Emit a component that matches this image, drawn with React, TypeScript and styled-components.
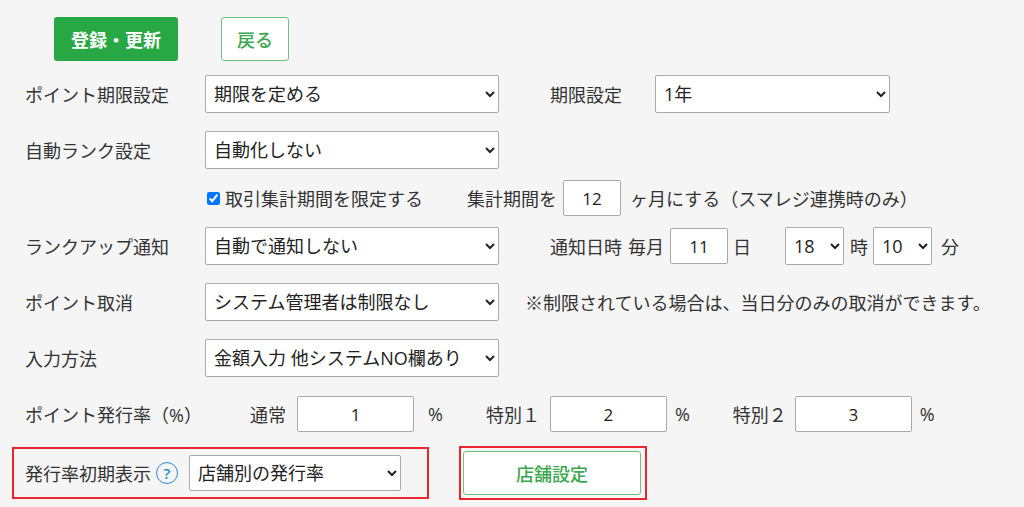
import React from 'react';
import styled, { createGlobalStyle } from 'styled-components';

const Global = createGlobalStyle`
  body {
    margin: 0;
    background: #f5f5f5;
    font-family: "Open Sans", "Noto Sans CJK JP", sans-serif;
    color: #333;
    font-size: 18px;
  }
`;

const Page = styled.div`
  width: 1024px;
  height: 507px;
  overflow: hidden;
  padding: 17px 0 0 0;
  box-sizing: border-box;
`;

const Toolbar = styled.div`
  display: flex;
  gap: 43px;
  padding-left: 54px;
  margin-bottom: 5px;
`;

const PrimaryButton = styled.button`
  height: 44px;
  width: 124px;
  background: #28a745;
  color: #fff;
  border: none;
  border-radius: 3px;
  font: 600 18px "Open Sans", "Noto Sans CJK JP", sans-serif;
`;

const OutlineButton = styled.button<{ $w?: number; $h?: number }>`
  height: ${p => p.$h ?? 44}px;
  width: ${p => p.$w ?? 68}px;
  padding: 0;
  background: #fff;
  color: #3aa84f;
  border: 1px solid #6cc47e;
  border-radius: 3px;
  font: 500 18px "Open Sans", "Noto Sans CJK JP", sans-serif;
`;

const Row = styled.div<{ $h?: number }>`
  display: flex;
  align-items: center;
  height: ${p => p.$h ?? 56}px;
  padding-left: 25px;
  white-space: nowrap;
`;

const Label = styled.span<{ $w?: number; $ml?: number }>`
  width: ${p => p.$w ?? 180}px;
  margin-left: ${p => p.$ml ?? 0}px;
  flex-shrink: 0;
`;

const Text = styled.span<{ $ml?: number }>`
  margin-left: ${p => p.$ml ?? 0}px;
`;

const Select = styled.select<{ $w: number; $ml?: number; $h?: number }>`
  width: ${p => p.$w}px;
  height: ${p => p.$h ?? 38}px;
  margin-left: ${p => p.$ml ?? 0}px;
  padding: 0 4px;
  background: #fff;
  border: 1px solid #a9a9a9;
  border-radius: 2px;
  font: 18px "Open Sans", "Noto Sans CJK JP", sans-serif;
  color: #222;
`;

const Input = styled.input<{ $w: number; $ml?: number }>`
  width: ${p => p.$w}px;
  height: 36px;
  box-sizing: border-box;
  margin-left: ${p => p.$ml ?? 0}px;
  background: #fff;
  border: 1px solid #a9a9a9;
  border-radius: 2px;
  text-align: center;
  font: 17px "Open Sans", "Noto Sans CJK JP", sans-serif;
  color: #222;
`;

const Check = styled.label`
  display: flex;
  align-items: center;
  gap: 5px;
  margin-left: 182px;
  input { margin: 0; width: 13px; height: 13px; accent-color: #0075ff; }
`;

const Highlight = styled.div<{ $w: number; $ml?: number; $h?: number; $pl?: number }>`
  display: flex;
  align-items: center;
  width: ${p => p.$w}px;
  height: ${p => p.$h ?? 52}px;
  box-sizing: border-box;
  margin-left: ${p => p.$ml ?? 0}px;
  border: 2px solid #e8262e;
  padding-left: ${p => p.$pl ?? 11}px;
`;

const Help = styled.span`
  display: inline-flex;
  align-items: center;
  justify-content: center;
  width: 22px;
  height: 22px;
  border: 1.5px solid #2a8ad6;
  border-radius: 50%;
  color: #2a8ad6;
  font-size: 15px;
  font-weight: 600;
  margin: 0 11px 0 5px;
  box-sizing: border-box;
`;

const BottomRow = styled.div`
  display: flex;
  align-items: center;
  padding-left: 12px;
  margin-top: 4px;
  white-space: nowrap;
`;

const hours = Array.from({ length: 24 }, (_, i) => i);

export default function App() {
  return (
    <Page>
      <Global />
      <Toolbar>
        <PrimaryButton>登録・更新</PrimaryButton>
        <OutlineButton>戻る</OutlineButton>
      </Toolbar>
      <Row>
        <Label>ポイント期限設定</Label>
        <Select $w={294}><option>期限を定める</option></Select>
        <Label $w={105} $ml={51}>期限設定</Label>
        <Select $w={235}><option>1年</option></Select>
      </Row>
      <Row>
        <Label>自動ランク設定</Label>
        <Select $w={294}><option>自動化しない</option></Select>
      </Row>
      <Row $h={40}>
        <Check><input type="checkbox" defaultChecked readOnly />取引集計期間を限定する</Check>
        <Text $ml={44}>集計期間を</Text>
        <Input $w={58} $ml={6} defaultValue="12" />
        <Text $ml={9}>ヶ月にする（スマレジ連携時のみ）</Text>
      </Row>
      <Row>
        <Label>ランクアップ通知</Label>
        <Select $w={294}><option>自動で通知しない</option></Select>
        <Text $ml={51}>通知日時</Text>
        <Text $ml={6}>毎月</Text>
        <Input $w={58} $ml={6} defaultValue="11" />
        <Text $ml={5}>日</Text>
        <Select $w={59} $ml={34} defaultValue="18">
          {hours.map(h => <option key={h}>{h}</option>)}
        </Select>
        <Text $ml={6}>時</Text>
        <Select $w={59} $ml={5} defaultValue="10"><option>10</option></Select>
        <Text $ml={9}>分</Text>
      </Row>
      <Row>
        <Label>ポイント取消</Label>
        <Select $w={294}><option>システム管理者は制限なし</option></Select>
        <Text $ml={26}>※制限されている場合は、当日分のみの取消ができます。</Text>
      </Row>
      <Row>
        <Label>入力方法</Label>
        <Select $w={294}><option>金額入力 他システムNO欄あり</option></Select>
      </Row>
      <Row>
        <Label $w={225}>ポイント発行率（%）</Label>
        <Text>通常</Text>
        <Input $w={117} $ml={11} defaultValue="1" />
        <Text $ml={14}>%</Text>
        <Text $ml={43}>特別１</Text>
        <Input $w={117} $ml={10} defaultValue="2" />
        <Text $ml={8}>%</Text>
        <Text $ml={43}>特別２</Text>
        <Input $w={117} $ml={8} defaultValue="3" />
        <Text $ml={8}>%</Text>
      </Row>
      <BottomRow>
        <Highlight $w={417}>
          <span>発行率初期表示</span>
          <Help>?</Help>
          <Select $w={212} $h={36}><option>店舗別の発行率</option></Select>
        </Highlight>
        <Highlight $w={188} $ml={30} $h={54} $pl={2}>
          <OutlineButton $w={178} $h={44}>店舗設定</OutlineButton>
        </Highlight>
      </BottomRow>
    </Page>
  );
}
